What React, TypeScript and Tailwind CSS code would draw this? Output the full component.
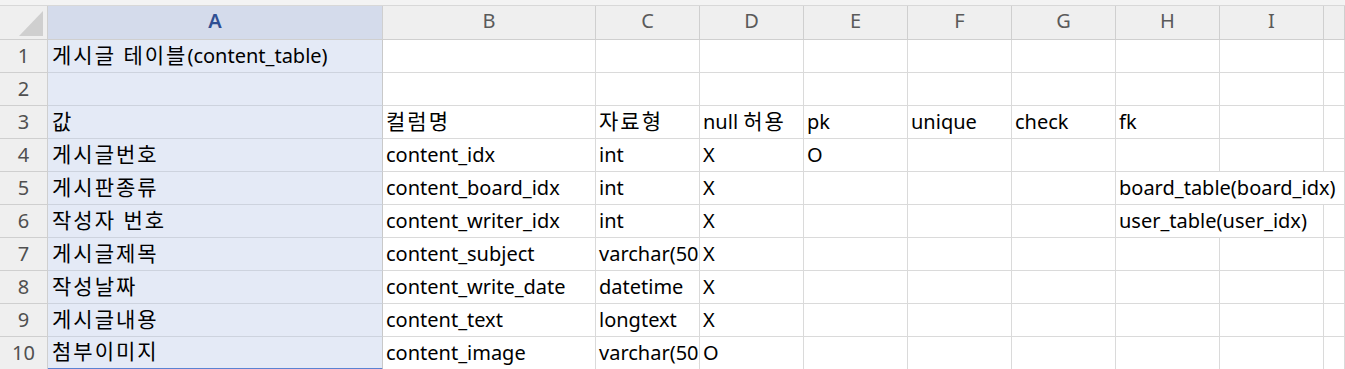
import React from 'react';

const COLS = ['A', 'B', 'C', 'D', 'E', 'F', 'G', 'H', 'I', ''];

// one entry per sheet row; index = column (A..J)
const ROWS: string[][] = [
  ['게시글 테이블(content_table)'],
  [],
  ['값', '컬럼명', '자료형', 'null 허용', 'pk', 'unique', 'check', 'fk'],
  ['게시글번호', 'content_idx', 'int', 'X', 'O'],
  ['게시판종류', 'content_board_idx', 'int', 'X', '', '', '', 'board_table(board_idx)'],
  ['작성자 번호', 'content_writer_idx', 'int', 'X', '', '', '', 'user_table(user_idx)'],
  ['게시글제목', 'content_subject', 'varchar(50)', 'X'],
  ['작성날짜', 'content_write_date', 'datetime', 'X'],
  ['게시글내용', 'content_text', 'longtext', 'X'],
  ['첨부이미지', 'content_image', 'varchar(50)', 'O'],
];

// cells whose text spills over into the next (empty) column: no right gridline
const spills = (r: number, c: number) =>
  (r === 4 && (c === 7 || c === 8)) || (r === 5 && c === 7);

// hangul in the fallback font runs narrower than in the original, so widen it a bit
function CellText({ text }: { text: string }) {
  const parts = text.split(/([가-힣][가-힣 ]*[가-힣]|[가-힣])/);
  return (
    <>
      {parts.map((p, i) =>
        /[가-힣]/.test(p) ? (
          <span key={i} className="text-[21px] tracking-[2px]">
            {p}
          </span>
        ) : (
          <React.Fragment key={i}>{p}</React.Fragment>
        )
      )}
    </>
  );
}

export default function App() {
  return (
    <div className="w-[1345px] h-[369px] overflow-hidden bg-white font-['Noto_Sans','Noto_Sans_CJK_KR',sans-serif] text-[20px] leading-[26px] text-black">
      <div className="h-[6px] bg-[#f3f3f3] border-b border-[#d8d8d8]" />
      <div className="grid grid-cols-[48px_335px_213px_104px_104px_104px_104px_104px_104px_104px_1fr]">
        {/* column headers */}
        <div className="h-[34px] bg-[#efefef] border-r border-b border-[#cfcfcf] flex items-end justify-end pr-[4px] pb-[3px]">
          <svg width="24" height="25" viewBox="0 0 24 25">
            <polygon points="24,0 24,25 0,25" fill="#cfcfcf" />
          </svg>
        </div>
        {COLS.map((c, i) => (
          <div
            key={c || 'J'}
            className={`h-[34px] border-r border-b border-[#cfcfcf] flex items-end justify-center pb-[5px] ${
              i === 0 ? 'bg-[#d4dbeb] text-[#2f4f93] font-semibold' : 'bg-[#efefef] text-[#5a5a5a]'
            }`}
          >
            {c}
          </div>
        ))}

        {ROWS.map((row, r) => (
          <React.Fragment key={r}>
            <div className="h-[33px] bg-[#efefef] border-r border-b border-[#cfcfcf] flex items-end justify-center pb-[3px] text-[#505050]">
              {r + 1}
            </div>
            {COLS.map((_, c) => {
              const text = row[c] || '';
              const selected = c === 0;
              const last = r === ROWS.length - 1;
              return (
                <div
                  key={c}
                  className={`h-[33px] border-b flex items-end pb-[3px] whitespace-nowrap ${
                    selected
                      ? `bg-[#e4eaf6] border-r border-r-[#c9c9c9] pl-[4px] ${last ? 'border-b-2 border-b-[#5b82d2]' : 'border-b-[#cdd3de]'}`
                      : `border-[#dadada] pl-[3px] ${spills(r, c) ? '' : 'border-r'}`
                  } ${c === 7 ? 'relative z-10 overflow-visible' : 'overflow-hidden'}`}
                >
                  <span className="block">
                    <CellText text={text} />
                  </span>
                </div>
              );
            })}
          </React.Fragment>
        ))}
      </div>
    </div>
  );
}
